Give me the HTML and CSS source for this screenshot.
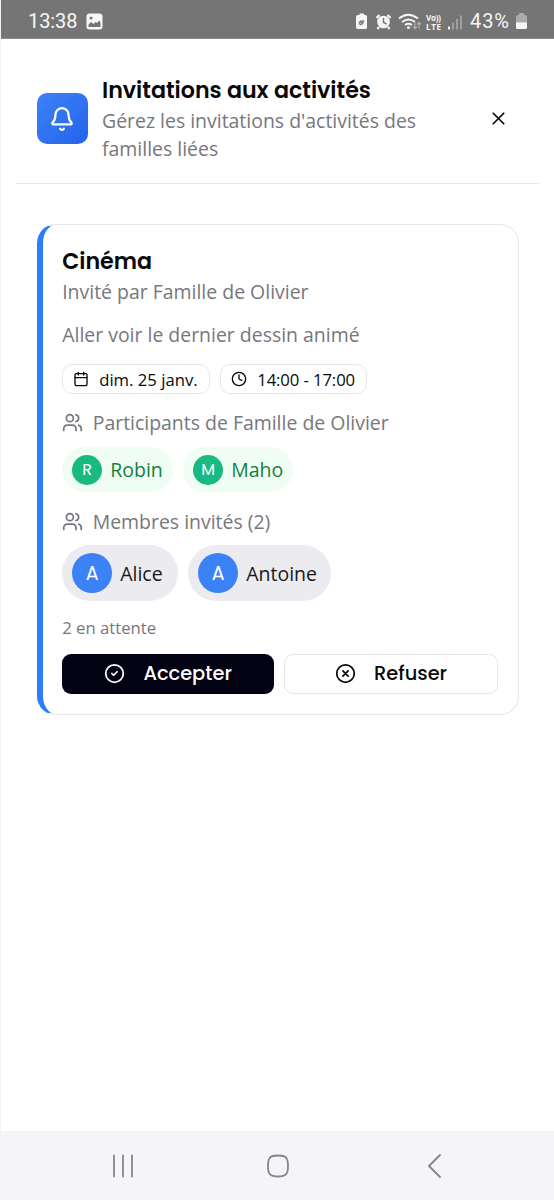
FILE: index.html
```
<!DOCTYPE html>
<html lang="fr">
<head>
<meta charset="utf-8">
<title>Invitations aux activités</title>
<link rel="stylesheet" href="styles.css">
</head>
<body>
<div class="screen">
  <div class="status">
    <span class="time">13:38</span>
    <svg class="photo" width="17" height="17" viewBox="0 0 17 17"><rect x=".5" y=".5" width="16" height="16" rx="3" fill="#f7f7f7"/><circle cx="5" cy="5" r="1.5" fill="#757575"/><path d="M2.500 14v-2.500l2.500-2.500 2.500 2 2-2 1.500 1 2-2.500 1.500 2V14z" fill="#757575"/></svg>
    <svg class="sys" width="108" height="22" viewBox="0 0 108 22">
      <path d="M3 5h1.500V3.500h4.500V5h1.500q1.500 0 1.500 1.500v11q0 1.500-1.500 1.500H3q-2 0-2-2V7q0-2 2-2z" fill="#f7f7f7"/>
      <path d="M3.500 15v-3q1-2.500 6-2-.2 5.500-4.500 5.500zM3.500 15l4-3" fill="#757575" stroke="#f7f7f7" stroke-width=".6"/>
      <circle cx="28.500" cy="12" r="6.300" fill="#f7f7f7"/><path d="M21.500 8l3-3M35.500 8l-3-3M24 17l-1.500 2M33 17l1.500 2" stroke="#f7f7f7" stroke-width="2.200"/><path d="M28.500 8v4.300l3 1.700" fill="none" stroke="#757575" stroke-width="1.500"/>
      <g fill="none" stroke="#f7f7f7" stroke-width="1.800"><path d="M44 8.500q9-7.500 19 0M47 12q6.500-5 13 0M50 15q3.500-2.500 7 0"/></g><circle cx="53.500" cy="17.500" r="1.500" fill="#f7f7f7"/>
      <path d="M60 12.500v6m-1.800-2 1.800 2 1.800-2M64 18.500v-6m-1.800 2 1.800-2 1.800 2" fill="none" stroke="#b0b0b0" stroke-width="1.200"/>
      <text class="lte" x="71" y="10.500" textLength="15">Vo))</text><text class="lte" x="71" y="20" textLength="15">LTE</text>
      <path d="M94 16.500v3" stroke="#f7f7f7" stroke-width="2"/><path d="M98 12.500v7M102 9v10.500M106 5.500v14" stroke="#a0a0a0" stroke-width="2"/>
    </svg>
    <span class="percent">43%</span>
    <svg class="battery" width="11" height="17" viewBox="0 0 11 17"><path d="M3 2V0h5v2h1.500Q11 2 11 3.500V10H0V3.500Q0 2 1.500 2z" fill="#aaa"/><path d="M0 9.500h11v5q0 1.500-1.500 1.500h-8Q0 16 0 14.500z" fill="#f7f7f7"/></svg>
  </div>

  <header class="header">
    <div class="bell"><svg class="line" width="26" height="26" viewBox="0 0 24 24"><path d="M10.270 21a2 2 0 0 0 3.460 0M3.260 15.330A1 1 0 0 0 4 17h16a1 1 0 0 0 .74-1.670C19.410 13.960 18 12.500 18 8A6 6 0 0 0 6 8c0 4.500-1.410 5.960-2.740 7.330"/></svg></div>
    <div class="heading"><h1 class="title">Invitations aux activités</h1><p class="text">Gérez les invitations d'activités des familles liées</p></div>
    <svg class="line close" width="21" height="21" viewBox="0 0 24 24"><path d="M18 6 6 18M6 6l12 12"/></svg>
  </header>

  <main class="card">
    <h2 class="name">Cinéma</h2>
    <p class="text">Invité par Famille de Olivier</p>
    <p class="text description">Aller voir le dernier dessin animé</p>
    <div class="badges">
      <span class="badge date"><svg class="line" width="16" height="16" viewBox="0 0 24 24"><path d="M8 2v4M16 2v4M3 10h18"/><rect x="3" y="4" width="18" height="18" rx="2"/></svg><span>dim. 25 janv.</span></span>
      <span class="badge hours"><svg class="line" width="16" height="16" viewBox="0 0 24 24"><circle cx="12" cy="12" r="10"/><path d="M12 6v6l4 2"/></svg><span>14:00 - 17:00</span></span>
    </div>
    <div class="label"><svg class="line" width="21" height="21" viewBox="0 0 24 24"><path d="M16 21v-2a4 4 0 0 0-4-4H6a4 4 0 0 0-4 4v2"/><circle cx="9" cy="7" r="4"/><path d="M22 21v-2a4 4 0 0 0-3-3.870M16 3.130a4 4 0 0 1 0 7.750"/></svg><span>Participants de Famille de Olivier</span></div>
    <div class="people">
      <span class="pill green robin"><b class="avatar">R</b><span>Robin</span></span>
      <span class="pill green maho"><b class="avatar">M</b><span>Maho</span></span>
    </div>
    <div class="label members"><svg class="line" width="21" height="21" viewBox="0 0 24 24"><path d="M16 21v-2a4 4 0 0 0-4-4H6a4 4 0 0 0-4 4v2"/><circle cx="9" cy="7" r="4"/><path d="M22 21v-2a4 4 0 0 0-3-3.870M16 3.130a4 4 0 0 1 0 7.750"/></svg><span>Membres invités (2)</span></div>
    <div class="people">
      <span class="pill gray alice"><b class="avatar">A</b><span>Alice</span></span>
      <span class="pill gray antoine"><b class="avatar">A</b><span>Antoine</span></span>
    </div>
    <p class="pending">2 en attente</p>
    <div class="actions">
      <button class="button accept"><svg class="line" width="21" height="21" viewBox="0 0 24 24"><circle cx="12" cy="12" r="10"/><path d="m9 12 2 2 4-4"/></svg><span>Accepter</span></button>
      <button class="button refuse"><svg class="line" width="21" height="21" viewBox="0 0 24 24"><circle cx="12" cy="12" r="10"/><path d="m15 9-6 6M9 9l6 6"/></svg><span>Refuser</span></button>
    </div>
  </main>

  <nav class="nav">
    <svg width="22" height="24" viewBox="0 0 22 24"><path d="M2 1.500v21M11 1.500v21M20 1.500v21"/></svg>
    <svg width="24" height="26" viewBox="0 0 24 26"><path d="M12 2.500c8 0 10 2 10 10.500s-2 10.500-10 10.500S2 21.500 2 13 4 2.500 12 2.500z"/></svg>
    <svg width="14" height="26" viewBox="0 0 14 26"><path d="M13 2 2 13l11 11"/></svg>
  </nav>
</div>
</body>
</html>
```
FILE: styles.css
```
* { box-sizing: border-box; }
body { margin: 0; background: #fff; font-family: "Open Sans", "Noto Sans", sans-serif; color: #09090b; }
h1, h2, p { margin: 0; }
svg { display: block; flex: none; }
.screen { width: 554px; height: 1200px; display: flex; flex-direction: column; border-left: 1px solid #f3f3f3; overflow: hidden; }
.line { fill: none; stroke: currentColor; stroke-width: 2; stroke-linecap: round; stroke-linejoin: round; }

.status { height: 39px; margin-left: -1px; padding: 4px 27px 0 28px; display: flex; align-items: center; background: #757575; border-bottom: 1px solid #8a8a8a; color: #f7f7f7; font: 20px/1 Roboto, sans-serif; }
.time { width: 50px; letter-spacing: -.1px; }
.photo { margin-left: 8px; }
.sys { margin-left: 252px; }
.lte { font: 700 8px "Open Sans", sans-serif; fill: #f7f7f7; }
.percent { width: 42px; margin-left: 7px; letter-spacing: .9px; }
.battery { margin-left: 4px; }

.header { height: 145px; margin: 0 15px; padding: 36px 30px 0 20.500px; display: flex; align-items: flex-start; border-bottom: 1.500px solid #e8e8ea; }
.bell { width: 51px; height: 51px; margin-top: 18px; display: flex; align-items: center; justify-content: center; border-radius: 10px; background: linear-gradient(135deg, #3b82f6, #2563eb); color: #fff; flex: none; }
.heading { width: 330px; margin-left: 14.500px; }
.title, .name { font-family: Poppins, Inter, sans-serif; font-weight: 600; font-size: 22.200px; line-height: 31px; white-space: nowrap; }
.heading .text { padding-top: 1px; }
.text { font-size: 19.450px; line-height: 28px; color: #77777e; }
.close { margin: 33px 0 0 auto; }

.card { width: 482.500px; height: 491px; margin: 40px 0 0 35.500px; padding: 21px 20px 20px 19.700px; border: 1px solid #e6e6e9; border-left: 6px solid #2f7df6; border-radius: 19px; }
.name + .text { margin-top: 1px; }
.description { margin-top: 15px; }
.badges { display: flex; gap: 10px; margin-top: 15px; }
.badge { height: 30px; display: flex; align-items: center; gap: 10px; padding: 0 10px; border: 1px solid #e7e7e9; border-radius: 10px; font-size: 16.700px; white-space: nowrap; }
.date { width: 148px; }
.hours { width: 147px; }
.hours span { letter-spacing: -.1px; }
.label { height: 28px; margin-top: 14px; display: flex; align-items: center; gap: 9.500px; font-size: 19.450px; color: #77777e; }
.members { margin-top: 15px; }
.people { display: flex; gap: 10px; margin-top: 11px; }
.members + .people { margin-top: 10px; }
.pill { display: flex; align-items: center; gap: 8px; padding-left: 10px; border-radius: 30px; font-size: 19.500px; white-space: nowrap; }
.green { height: 45px; color: #15803d; background: #f0fdf4; }
.gray { height: 56px; color: #18181b; background: #ececf0; }
.avatar { width: 30px; height: 30px; display: flex; align-items: center; justify-content: center; border-radius: 50%; background: #18b982; color: #fff; font: 400 16px Poppins, Inter, sans-serif; flex: none; }
.gray .avatar { width: 40px; height: 40px; background: #3b82f6; font-size: 19px; }
.robin { width: 111px; }
.maho { width: 110px; }
.alice { width: 116px; }
.antoine { width: 143px; }
.pending { margin-top: 15px; font-size: 16.700px; line-height: 23px; color: #77777e; }
.actions { display: flex; gap: 10px; margin-top: 14.500px; }
.button { height: 40px; padding: 0; display: flex; align-items: center; justify-content: center; gap: 18px; border-radius: 9px; font: 500 19.400px Poppins, Inter, sans-serif; white-space: nowrap; }
.accept { width: 212px; border: 0; background: #030213; color: #fff; }
.refuse { width: 214px; border: 1px solid #e6e6e9; background: #fff; color: #09090b; }

.nav { height: 69px; margin-top: auto; padding: 1px 113px 0 111px; display: flex; align-items: center; gap: 132px; background: #f5f5f8; }
.nav svg:last-child { margin-left: auto; }
.nav path { fill: none; stroke: #85858a; stroke-width: 1.800; stroke-linecap: round; stroke-linejoin: round; }
```
